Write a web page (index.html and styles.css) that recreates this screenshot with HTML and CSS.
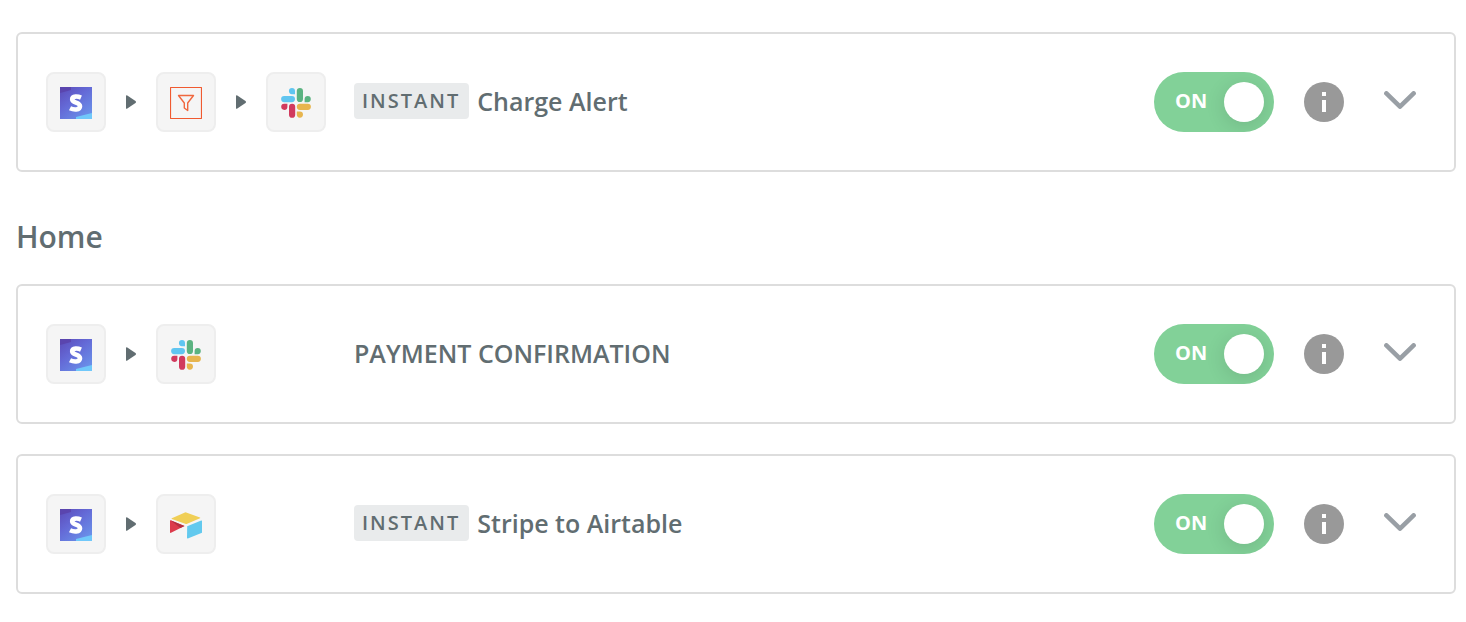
FILE: index.html
```html
<!DOCTYPE html>
<html lang="en">
<head>
<meta charset="utf-8">
<meta name="viewport" content="width=device-width, initial-scale=1">
<title>Zaps</title>
<link rel="stylesheet" href="styles.css">
</head>
<body>
<svg class="sprite" aria-hidden="true">
  <defs>
    <linearGradient id="stripe-bg" x1="0" y1="0" x2="0.8" y2="1">
      <stop offset="0" stop-color="#5c4bb8"/>
      <stop offset="0.45" stop-color="#6469d6"/>
      <stop offset="1" stop-color="#6a92ea"/>
    </linearGradient>
  </defs>
  <symbol id="stripe" viewBox="0 0 32 32">
    <path fill="url(#stripe-bg)" d="M0 0h32v32H0z"/>
    <path fill="#5a45ae" d="M0 0h11v3L0 6z"/>
    <path fill="#70c8fa" d="M16 32v-2l16-4v6z"/>
    <path fill="none" stroke="#fff" stroke-width="4.600" d="M21 10.600C18 9.300 12.200 8.700 12.200 12.200C12.200 16.300 20 15 20 19.300C20 23.400 13.500 23 10 21.300"/>
  </symbol>
  <symbol id="filter" viewBox="0 0 32 32">
    <rect x="0.500" y="0.500" width="31" height="31" rx="0.500" fill="none" stroke="#f05a30" stroke-width="1.200"/>
    <path fill="none" stroke="#f0683f" stroke-width="1.400" stroke-linejoin="round" d="M8.500 8.500h15l-5.800 7.500v7.500l-3.400-2.500v-5z"/>
  </symbol>
  <symbol id="slack" viewBox="0 0 30 30">
    <path fill="#60c5f0" d="M11 0a3 3 0 0 1 3 3v3.200h-3A3.100 3.100 0 0 1 11 0zM3.200 8h7.700a3.100 3.100 0 0 1 0 6.200H3.200a3.100 3.100 0 0 1 0-6.200z"/>
    <path fill="#5bb381" d="M15.800 3.100a3.100 3.100 0 0 1 6.200 0v7.900a3.100 3.100 0 0 1-6.200 0zM23.600 14.200V11a3.100 3.100 0 1 1 3.200 3.200z"/>
    <path fill="#d13a5e" d="M6.400 15.700v3.200a3.100 3.100 0 1 1-3.200-3.200zM8 18.800a3.100 3.100 0 0 1 6.200 0v7.900a3.100 3.100 0 0 1-6.200 0z"/>
    <path fill="#e7b54e" d="M18.900 15.700h7.900a3.100 3.100 0 0 1 0 6.200h-7.900a3.100 3.100 0 0 1 0-6.200zM15.800 23.500h3.100a3.100 3.100 0 1 1-3.100 3.100z"/>
  </symbol>
  <symbol id="airtable" viewBox="0 0 32 32">
    <path fill="#f0cf56" d="M1.800 9.200L15.500 3.200l14.500 5.300q.6.400 0 .8L17.200 14.800q-1 .4-2 0L1.800 10q-.6-.4 0-.8z"/>
    <path fill="#62c9ee" d="M17.200 17.300L31.200 11.500q.8-.2.800.6v11.700L17.800 29.400q-.8.200-.8-.6z"/>
    <path fill="#dc3b4c" d="M.5 11.200L14.500 17 1 23.800q-1 .4-1-.5V11.500z"/>
    <path fill="#b52f40" d="M.5 11.200L14.500 17l-4.200 2.100z"/>
  </symbol>
  <symbol id="arrow" viewBox="0 0 10 14">
    <path fill="#616d71" d="M0 1q0-1.300 1.300-.6l8.200 5.700q1 .9 0 1.800l-8.200 5.700Q0 14.300 0 13z"/>
  </symbol>
  <symbol id="info" viewBox="0 0 40 40">
    <circle cx="20" cy="20" r="20" fill="#999"/>
    <path fill="#fff" d="M18 10h4v4h-4zM18 18h4v12h-4z"/>
  </symbol>
  <symbol id="chevron" viewBox="0 0 32 18">
    <path fill="none" stroke="#999fa5" stroke-width="4.600" stroke-linecap="round" stroke-linejoin="round" d="M2.400 2.400L16 15.600 29.600 2.400"/>
  </symbol>
</svg>
<main class="page">
  <article class="zap">
    <div class="zap-steps">
      <span class="tile"><svg class="app" role="img" aria-label="Stripe"><use href="#stripe"/></svg></span>
      <svg class="arrow" aria-hidden="true"><use href="#arrow"/></svg>
      <span class="tile"><svg class="app" role="img" aria-label="Filter"><use href="#filter"/></svg></span>
      <svg class="arrow" aria-hidden="true"><use href="#arrow"/></svg>
      <span class="tile"><svg class="app app-slack" role="img" aria-label="Slack"><use href="#slack"/></svg></span>
    </div>
    <h3 class="zap-title"><span class="tag">INSTANT</span>Charge Alert</h3>
    <div class="zap-controls">
      <label class="toggle"><input class="toggle-input" type="checkbox" checked><span class="toggle-text">ON</span><span class="knob"></span></label>
      <button class="icon-button" type="button" aria-label="Details"><svg class="info"><use href="#info"/></svg></button>
      <button class="icon-button expand" type="button" aria-label="Expand"><svg class="chevron"><use href="#chevron"/></svg></button>
    </div>
  </article>

  <h2 class="folder">Home</h2>

  <div class="zap-list">
    <article class="zap">
      <div class="zap-steps">
        <span class="tile"><svg class="app" role="img" aria-label="Stripe"><use href="#stripe"/></svg></span>
        <svg class="arrow" aria-hidden="true"><use href="#arrow"/></svg>
        <span class="tile"><svg class="app app-slack" role="img" aria-label="Slack"><use href="#slack"/></svg></span>
      </div>
      <h3 class="zap-title">PAYMENT CONFIRMATION</h3>
      <div class="zap-controls">
        <label class="toggle"><input class="toggle-input" type="checkbox" checked><span class="toggle-text">ON</span><span class="knob"></span></label>
        <button class="icon-button" type="button" aria-label="Details"><svg class="info"><use href="#info"/></svg></button>
        <button class="icon-button expand" type="button" aria-label="Expand"><svg class="chevron"><use href="#chevron"/></svg></button>
      </div>
    </article>
    <article class="zap">
      <div class="zap-steps">
        <span class="tile"><svg class="app" role="img" aria-label="Stripe"><use href="#stripe"/></svg></span>
        <svg class="arrow" aria-hidden="true"><use href="#arrow"/></svg>
        <span class="tile"><svg class="app" role="img" aria-label="Airtable"><use href="#airtable"/></svg></span>
      </div>
      <h3 class="zap-title"><span class="tag">INSTANT</span>Stripe to Airtable</h3>
      <div class="zap-controls">
        <label class="toggle"><input class="toggle-input" type="checkbox" checked><span class="toggle-text">ON</span><span class="knob"></span></label>
        <button class="icon-button" type="button" aria-label="Details"><svg class="info"><use href="#info"/></svg></button>
        <button class="icon-button expand" type="button" aria-label="Expand"><svg class="chevron"><use href="#chevron"/></svg></button>
      </div>
    </article>
  </div>
</main>
</body>
</html>
```
FILE: styles.css
```css
* {
  box-sizing: border-box;
}

body {
  margin: 0;
  background: #fff;
  color: #616d71;
  font-family: "Open Sans", "Noto Sans", sans-serif;
}

.sprite {
  position: absolute;
  width: 0;
  height: 0;
}

.page {
  padding: 32px 10px 28px 16px;
}

.zap-list {
  display: flex;
  flex-direction: column;
  gap: 30px;
}

.zap {
  display: grid;
  grid-template-columns: 308px 1fr auto;
  align-items: center;
  padding: 38px 38px 38px 28px;
  border: 2px solid #ddd;
  border-radius: 6px;
}

.zap-steps {
  display: flex;
  align-items: center;
  gap: 20px;
}

.tile {
  display: flex;
  align-items: center;
  justify-content: center;
  width: 60px;
  height: 60px;
  padding-top: 2px;
  border: 2px solid #eee;
  border-radius: 8px;
  background: #f5f5f5;
}

.app {
  width: 32px;
  height: 32px;
}

.app-slack {
  width: 30px;
  height: 30px;
}

.arrow {
  width: 10px;
  height: 14px;
}

.zap-title {
  display: flex;
  align-items: center;
  gap: 8px;
  margin: 0;
  padding-bottom: 2px;
  font-size: 25px;
  font-weight: 600;
  line-height: 36px;
}

.tag {
  padding: 0 9px 0 8px;
  border-radius: 4px;
  background: #e9ebec;
  font-size: 20px;
  letter-spacing: 2px;
}

.zap-controls {
  display: flex;
  align-items: center;
  gap: 30px;
}

.toggle {
  display: flex;
  align-items: center;
  justify-content: space-between;
  width: 120px;
  height: 60px;
  padding: 0 10px 0 21px;
  border-radius: 30px;
  background: #82d198;
  color: #fff;
  font-size: 20px;
  font-weight: 700;
  line-height: 28px;
  overflow: hidden;
  cursor: pointer;
}

.toggle-input {
  appearance: none;
  position: absolute;
  margin: 0;
}

.toggle-text {
  padding-bottom: 2px;
}

.knob {
  width: 40px;
  height: 40px;
  border-radius: 50%;
  background: #fff;
  box-shadow: 0 4px 20px rgba(0, 0, 0, 0.12);
}

.icon-button {
  display: flex;
  padding: 0;
  border: 0;
  background: none;
  cursor: pointer;
}

.info {
  width: 40px;
  height: 40px;
}

.expand {
  padding: 0 0 4px 10px;
}

.chevron {
  width: 32px;
  height: 18px;
}

.folder {
  margin: 44px 0 26px;
  font-size: 30px;
  font-weight: 600;
  line-height: 42px;
}
```
